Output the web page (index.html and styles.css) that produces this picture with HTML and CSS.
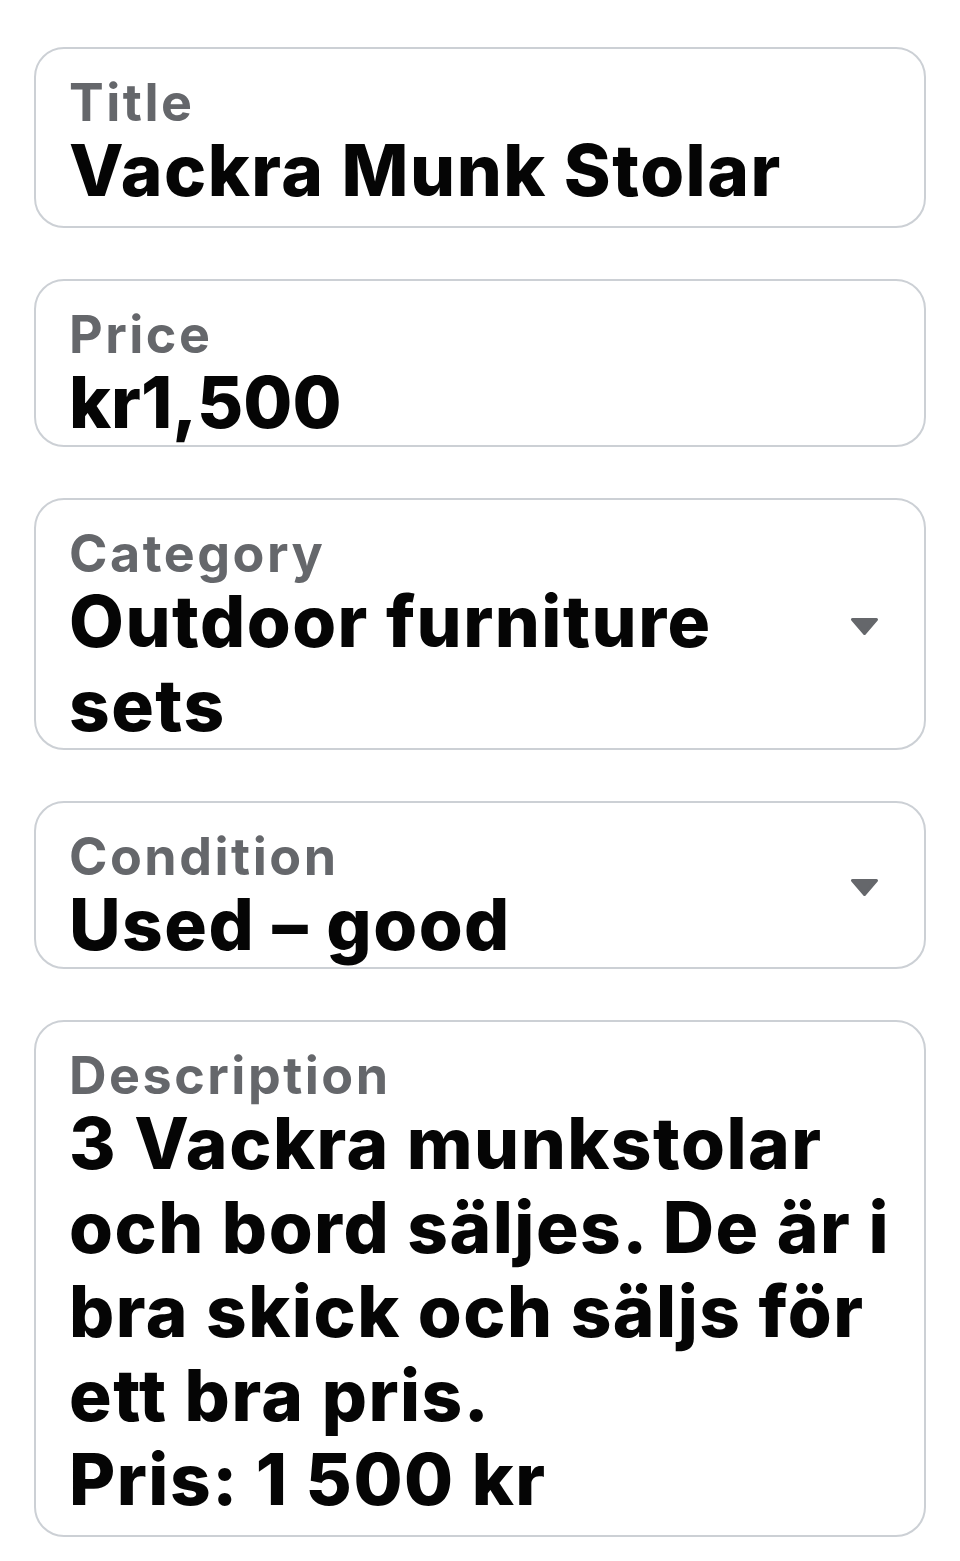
FILE: index.html
```html
<!DOCTYPE html>
<html lang="sv">
<head>
    <meta charset="UTF-8">
    <meta name="viewport" content="width=device-width, initial-scale=1.0">
    <title>Edit listing</title>
    <link rel="stylesheet" href="styles.css">
</head>
<body>
    <main class="listing-form">
        <div class="field field-text">
            <div class="field-body">
                <div class="field-label">Title</div>
                <div class="field-value">Vackra Munk Stolar</div>
            </div>
        </div>

        <div class="field">
            <div class="field-body">
                <div class="field-label">Price</div>
                <div class="field-value field-price">kr1,500</div>
            </div>
        </div>

        <div class="field field-select">
            <div class="field-body">
                <div class="field-label">Category</div>
                <div class="field-value">Outdoor furniture sets</div>
            </div>
            <svg class="caret" viewBox="0 0 31 19" width="31" height="19">
                <polygon points="3.5,2.5 27.5,2.5 15.5,16.5"></polygon>
            </svg>
        </div>

        <div class="field field-select">
            <div class="field-body">
                <div class="field-label">Condition</div>
                <div class="field-value">Used – good</div>
            </div>
            <svg class="caret" viewBox="0 0 31 19" width="31" height="19">
                <polygon points="3.5,2.5 27.5,2.5 15.5,16.5"></polygon>
            </svg>
        </div>

        <div class="field field-text">
            <div class="field-body">
                <div class="field-label">Description</div>
                <div class="field-value field-multiline">3 Vackra munkstolar och bord säljes. De är i bra skick och säljs för ett bra pris.
Pris: 1&nbsp;500 kr</div>
            </div>
        </div>
    </main>
</body>
</html>
```
FILE: styles.css
```css
body {
    margin: 0;
    background: #fff;
    font-family: "Inter", "Noto Sans", sans-serif;
    color: #050505;
}

.listing-form {
    display: flex;
    flex-direction: column;
    gap: 51px;
    padding: 47px 34px 0;
}

.field {
    display: flex;
    align-items: center;
    border: 2px solid #ccd0d5;
    border-radius: 30px;
    padding: 29px 20px 1px 33px;
}

.field-text {
    padding-bottom: 14px;
}

.field-select {
    padding-right: 44px;
}

.field-body {
    flex: 1;
    min-width: 0;
}

.field-label {
    font-size: 52px;
    line-height: 50px;
    font-weight: 700;
    letter-spacing: 2.5px;
    color: #65676b;
}

.field-value {
    font-size: 71px;
    line-height: 84px;
    font-weight: 800;
    letter-spacing: 1.5px;
}

.field-price {
    letter-spacing: 0;
}

.field-select .field-value {
    padding-right: 60px;
}

.field-multiline {
    white-space: pre-line;
}

.caret {
    flex: none;
    margin-bottom: 24px;
    fill: #65676b;
    stroke: #65676b;
    stroke-width: 3;
    stroke-linejoin: round;
}
```
